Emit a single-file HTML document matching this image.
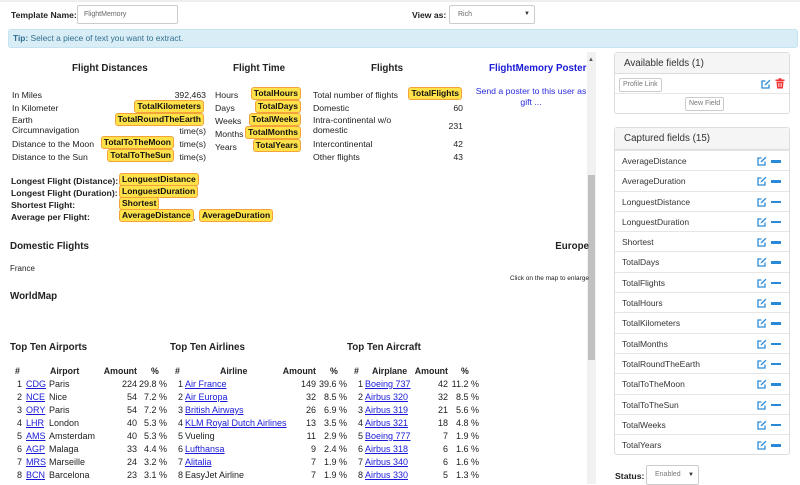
<!DOCTYPE html>
<html><head><meta charset="utf-8"><style>
*{margin:0;padding:0;box-sizing:border-box}
body{width:800px;height:484px;overflow:hidden;background:#fff;font-family:"Liberation Sans",sans-serif;font-size:8.7px;color:#222;position:relative}
.a{position:absolute;white-space:nowrap;line-height:12px}
.b{font-weight:bold}
.h{font-weight:bold;font-size:9.8px}
.t{position:absolute;white-space:nowrap;background:#ffe24a;border:1.5px solid #f3a33a;border-radius:3px;font-weight:bold;font-size:8.5px;line-height:11px;padding:0 2px;color:#111}
.r{text-align:right}
.lk{color:#1a1ad8;text-decoration:underline}
.row{position:absolute;left:0;width:800px;height:13px;line-height:13px;font-size:9px}
.row span{position:absolute;white-space:nowrap}
.panel{position:absolute;left:614px;width:176px;border:1px solid #ddd;border-radius:3px;background:#fff}
.ph{background:#f5f5f5;border-bottom:1px solid #ddd;font-size:9.8px;color:#333;padding-left:9px}
.fr{position:relative;height:20.3px;border-top:1px solid #e6e6e6;font-size:8.5px;color:#333;line-height:20px;padding-left:7px}
.fr:first-of-type{border-top:none}
.ic{position:absolute;top:5px;right:22px;width:10px;height:10px}
.mn{position:absolute;top:9px;right:8px;width:10px;height:2.5px;background:#2a8ad8}
.btn{position:absolute;border:1px solid #ccc;border-radius:2px;font-size:7px;color:#777;padding:0 3px;line-height:12px;background:#fff}
</style></head><body>
<div style="position:absolute;left:0;top:0;width:800px;height:2px;background:#eee"></div>
<div class="a b" style="left:11px;top:9px;font-size:8.6px">Template Name:</div>
<div style="position:absolute;left:77px;top:5px;width:101px;height:19px;border:1px solid #ccc;border-radius:2px;font-size:7px;color:#666;padding-left:6px;line-height:17px">FlightMemory</div>
<div class="a b" style="left:412px;top:9px;font-size:8.6px">View as:</div>
<div style="position:absolute;left:449px;top:5px;width:86px;height:19px;border:1px solid #ccc;border-radius:2px;font-size:7px;color:#666;padding-left:8px;line-height:17px">Rich<span style="position:absolute;right:4px;font-size:6px;color:#333">▼</span></div>
<div style="position:absolute;left:8px;top:29px;width:790px;height:19px;background:#d9edf7;border:1px solid #c5e3f1;border-radius:3px;color:#31708f;line-height:17px;padding-left:4px;font-size:8.4px"><b>Tip:</b> Select a piece of text you want to extract.</div>

<div style="position:absolute;left:587px;top:52px;width:9px;height:432px;background:#f1f1f1"></div>
<div style="position:absolute;left:588px;top:175px;width:7px;height:185px;background:#c1c1c1"></div>
<div class="a" style="left:588px;top:54px;font-size:6px;color:#555">▲</div>

<div class="a h" style="left:72px;top:63px">Flight Distances</div>
<div class="a h" style="left:233px;top:63px">Flight Time</div>
<div class="a h" style="left:371px;top:63px">Flights</div>
<div class="a h" style="left:489px;top:63px;color:#1a1ad8">FlightMemory Poster</div>
<div class="a" style="left:472px;top:86px;width:118px;text-align:center;white-space:normal;color:#2a2ae0;line-height:11px">Send a poster to this user as gift ...</div>

<div class="a" style="left:12px;top:89px">In Miles</div><div class="a r" style="right:594px;top:89px">392,463</div>
<div class="a" style="left:12px;top:102px">In Kilometer</div><div class="t" style="right:596px;top:100px">TotalKilometers</div>
<div class="a" style="left:12px;top:115px;line-height:10px">Earth<br>Circumnavigation</div><div class="t" style="right:596px;top:113px">TotalRoundTheEarth</div><div class="a" style="right:594px;top:125px">time(s)</div>
<div class="a" style="left:12px;top:138px">Distance to the Moon</div><div class="t" style="right:626px;top:136px">TotalToTheMoon</div><div class="a" style="right:594px;top:138px">time(s)</div>
<div class="a" style="left:12px;top:151px">Distance to the Sun</div><div class="t" style="right:626px;top:149px">TotalToTheSun</div><div class="a" style="right:594px;top:151px">time(s)</div>

<div class="a" style="left:215px;top:89px">Hours</div><div class="t" style="right:499px;top:87px">TotalHours</div>
<div class="a" style="left:215px;top:102px">Days</div><div class="t" style="right:499px;top:100px">TotalDays</div>
<div class="a" style="left:215px;top:115px">Weeks</div><div class="t" style="right:499px;top:113px">TotalWeeks</div>
<div class="a" style="left:215px;top:128px">Months</div><div class="t" style="right:499px;top:126px">TotalMonths</div>
<div class="a" style="left:215px;top:141px">Years</div><div class="t" style="right:499px;top:139px">TotalYears</div>

<div class="a" style="left:313px;top:89px">Total number of flights</div><div class="t" style="right:338px;top:87px">TotalFlights</div>
<div class="a" style="left:313px;top:102px">Domestic</div><div class="a" style="right:337px;top:102px">60</div>
<div class="a" style="left:313px;top:115px;line-height:10px">Intra-continental w/o<br>domestic</div><div class="a" style="right:337px;top:120px">231</div>
<div class="a" style="left:313px;top:138px">Intercontinental</div><div class="a" style="right:337px;top:138px">42</div>
<div class="a" style="left:313px;top:151px">Other flights</div><div class="a" style="right:337px;top:151px">43</div>

<div class="a b" style="left:11px;top:175px">Longest Flight (Distance):</div><div class="t" style="left:119px;top:173px">LonguestDistance</div>
<div class="a b" style="left:11px;top:187px">Longest Flight (Duration):</div><div class="t" style="left:119px;top:185px">LonguestDuration</div>
<div class="a b" style="left:11px;top:199px">Shortest Flight:</div><div class="t" style="left:119px;top:197px">Shortest</div>
<div class="a b" style="left:11px;top:211px">Average per Flight:</div><div class="t" style="left:119px;top:209px">AverageDistance</div><div class="a" style="left:193px;top:211px">,</div><div class="t" style="left:199px;top:209px">AverageDuration</div>

<div class="a h" style="left:10px;top:241px">Domestic Flights</div>
<div class="a h" style="right:211px;top:241px">Europe</div>
<div class="a" style="left:10px;top:263px;font-size:8px">France</div>
<div class="a" style="right:211px;top:273px;font-size:6.5px">Click on the map to enlarge</div>
<div class="a h" style="left:10px;top:291px">WorldMap</div>

<div class="a h" style="left:10px;top:342px">Top Ten Airports</div>
<div class="a h" style="left:170px;top:342px">Top Ten Airlines</div>
<div class="a h" style="left:347px;top:342px">Top Ten Aircraft</div>

<div class="row b" style="top:365px;font-size:8.8px"><span style="left:15px">#</span><span style="left:50px">Airport</span><span style="right:663px">Amount</span><span style="left:151px">%</span><span style="left:175px">#</span><span style="left:220px">Airline</span><span style="right:484px">Amount</span><span style="left:330px">%</span><span style="left:354px">#</span><span style="left:372px">Airplane</span><span style="right:352px">Amount</span><span style="left:461px">%</span></div>
<div class="row" style="top:378px"><span style="right:778px">1</span><span style="left:26px" class="lk">CDG</span><span style="left:49px">Paris</span><span style="right:663px">224</span><span style="right:633px">29.8 %</span><span style="right:617px">1</span><span style="left:185px" class="lk">Air France</span><span style="right:484px">149</span><span style="right:453px">39.6 %</span><span style="right:437px">1</span><span style="left:365px" class="lk">Boeing 737</span><span style="right:352px">42</span><span style="right:321px">11.2 %</span></div>
<div class="row" style="top:391px"><span style="right:778px">2</span><span style="left:26px" class="lk">NCE</span><span style="left:49px">Nice</span><span style="right:663px">54</span><span style="right:633px">7.2 %</span><span style="right:617px">2</span><span style="left:185px" class="lk">Air Europa</span><span style="right:484px">32</span><span style="right:453px">8.5 %</span><span style="right:437px">2</span><span style="left:365px" class="lk">Airbus 320</span><span style="right:352px">32</span><span style="right:321px">8.5 %</span></div>
<div class="row" style="top:404px"><span style="right:778px">3</span><span style="left:26px" class="lk">ORY</span><span style="left:49px">Paris</span><span style="right:663px">54</span><span style="right:633px">7.2 %</span><span style="right:617px">3</span><span style="left:185px" class="lk">British Airways</span><span style="right:484px">26</span><span style="right:453px">6.9 %</span><span style="right:437px">3</span><span style="left:365px" class="lk">Airbus 319</span><span style="right:352px">21</span><span style="right:321px">5.6 %</span></div>
<div class="row" style="top:417px"><span style="right:778px">4</span><span style="left:26px" class="lk">LHR</span><span style="left:49px">London</span><span style="right:663px">40</span><span style="right:633px">5.3 %</span><span style="right:617px">4</span><span style="left:185px" class="lk">KLM Royal Dutch Airlines</span><span style="right:484px">13</span><span style="right:453px">3.5 %</span><span style="right:437px">4</span><span style="left:365px" class="lk">Airbus 321</span><span style="right:352px">18</span><span style="right:321px">4.8 %</span></div>
<div class="row" style="top:430px"><span style="right:778px">5</span><span style="left:26px" class="lk">AMS</span><span style="left:49px">Amsterdam</span><span style="right:663px">40</span><span style="right:633px">5.3 %</span><span style="right:617px">5</span><span style="left:185px">Vueling</span><span style="right:484px">11</span><span style="right:453px">2.9 %</span><span style="right:437px">5</span><span style="left:365px" class="lk">Boeing 777</span><span style="right:352px">7</span><span style="right:321px">1.9 %</span></div>
<div class="row" style="top:443px"><span style="right:778px">6</span><span style="left:26px" class="lk">AGP</span><span style="left:49px">Malaga</span><span style="right:663px">33</span><span style="right:633px">4.4 %</span><span style="right:617px">6</span><span style="left:185px" class="lk">Lufthansa</span><span style="right:484px">9</span><span style="right:453px">2.4 %</span><span style="right:437px">6</span><span style="left:365px" class="lk">Airbus 318</span><span style="right:352px">6</span><span style="right:321px">1.6 %</span></div>
<div class="row" style="top:456px"><span style="right:778px">7</span><span style="left:26px" class="lk">MRS</span><span style="left:49px">Marseille</span><span style="right:663px">24</span><span style="right:633px">3.2 %</span><span style="right:617px">7</span><span style="left:185px" class="lk">Alitalia</span><span style="right:484px">7</span><span style="right:453px">1.9 %</span><span style="right:437px">7</span><span style="left:365px" class="lk">Airbus 340</span><span style="right:352px">6</span><span style="right:321px">1.6 %</span></div>
<div class="row" style="top:469px"><span style="right:778px">8</span><span style="left:26px" class="lk">BCN</span><span style="left:49px">Barcelona</span><span style="right:663px">23</span><span style="right:633px">3.1 %</span><span style="right:617px">8</span><span style="left:185px">EasyJet Airline</span><span style="right:484px">7</span><span style="right:453px">1.9 %</span><span style="right:437px">8</span><span style="left:365px" class="lk">Airbus 330</span><span style="right:352px">5</span><span style="right:321px">1.3 %</span></div>

<svg width="0" height="0" style="position:absolute"><defs>
<symbol id="ed" viewBox="0 0 10 10"><path d="M8 5.5V9H1V2h3.5" fill="none" stroke="#2a8ad8" stroke-width="1.3"/><path d="M3.5 6.5L4 5 8.5 0.7 9.4 1.6 5 6z" fill="#2a8ad8"/></symbol>
</defs></svg>

<div class="panel" style="top:52px;height:62px">
<div class="ph" style="height:21px;line-height:21px">Available fields (1)</div>
<div style="position:relative;height:20px;border-bottom:1px solid #e6e6e6"><div class="btn" style="left:4px;top:4px">Profile Link</div>
<svg style="position:absolute;left:146px;top:5px" width="10" height="10"><use href="#ed"/></svg>
<svg style="position:absolute;left:160px;top:4px" width="10" height="11" viewBox="0 0 10 11"><rect x="0.5" y="1.5" width="9" height="1.5" fill="#e33"/><rect x="3.5" y="0.3" width="3" height="1.5" fill="#e33"/><path d="M1.5 3.5h7l-0.6 7h-5.8z" fill="#e33"/><path d="M3.5 5v4M5 5v4M6.5 5v4" stroke="#fff" stroke-width="0.6"/></svg></div>
<div class="btn" style="left:70px;top:44px">New Field</div>
</div>

<div class="panel" style="top:127px;height:328px">
<div class="ph" style="height:22px;line-height:22px">Captured fields (15)</div>
<div class="fr">AverageDistance<svg class="ic"><use href="#ed"/></svg><div class="mn"></div></div>
<div class="fr">AverageDuration<svg class="ic"><use href="#ed"/></svg><div class="mn"></div></div>
<div class="fr">LonguestDistance<svg class="ic"><use href="#ed"/></svg><div class="mn"></div></div>
<div class="fr">LonguestDuration<svg class="ic"><use href="#ed"/></svg><div class="mn"></div></div>
<div class="fr">Shortest<svg class="ic"><use href="#ed"/></svg><div class="mn"></div></div>
<div class="fr">TotalDays<svg class="ic"><use href="#ed"/></svg><div class="mn"></div></div>
<div class="fr">TotalFlights<svg class="ic"><use href="#ed"/></svg><div class="mn"></div></div>
<div class="fr">TotalHours<svg class="ic"><use href="#ed"/></svg><div class="mn"></div></div>
<div class="fr">TotalKilometers<svg class="ic"><use href="#ed"/></svg><div class="mn"></div></div>
<div class="fr">TotalMonths<svg class="ic"><use href="#ed"/></svg><div class="mn"></div></div>
<div class="fr">TotalRoundTheEarth<svg class="ic"><use href="#ed"/></svg><div class="mn"></div></div>
<div class="fr">TotalToTheMoon<svg class="ic"><use href="#ed"/></svg><div class="mn"></div></div>
<div class="fr">TotalToTheSun<svg class="ic"><use href="#ed"/></svg><div class="mn"></div></div>
<div class="fr">TotalWeeks<svg class="ic"><use href="#ed"/></svg><div class="mn"></div></div>
<div class="fr">TotalYears<svg class="ic"><use href="#ed"/></svg><div class="mn"></div></div>
</div>

<div class="a b" style="left:615px;top:470px">Status:</div>
<div style="position:absolute;left:646px;top:465px;width:53px;height:20px;border:1px solid #ccc;border-radius:2px;font-size:7px;color:#777;padding-left:8px;line-height:18px">Enabled<span style="position:absolute;right:4px;font-size:6px;color:#333">▼</span></div>
</body></html>
